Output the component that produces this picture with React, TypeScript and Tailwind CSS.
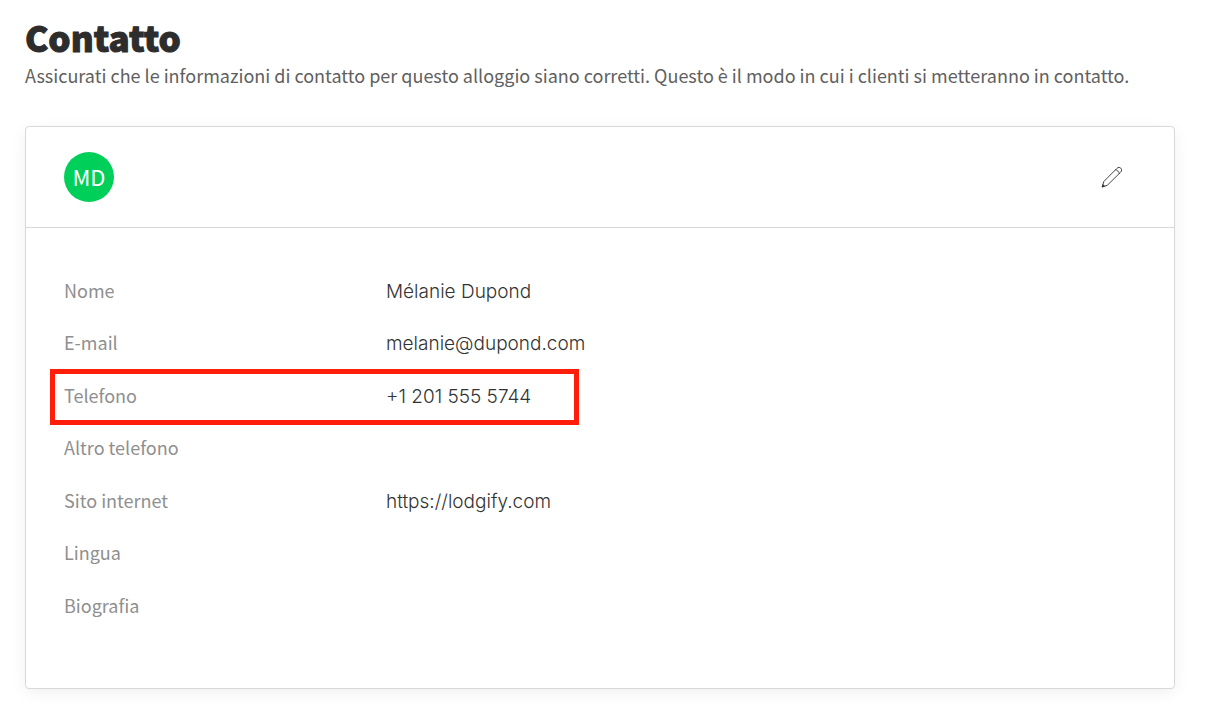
type Field = { label: string; value?: string; href?: string; highlighted?: boolean };

const fields: Field[] = [
  { label: "Nome", value: "Mélanie Dupond" },
  { label: "E-mail", value: "melanie@dupond.com" },
  { label: "Telefono", value: "+1 201 555 5744", highlighted: true },
  { label: "Altro telefono" },
  { label: "Sito internet", value: "https://lodgify.com", href: "https://lodgify.com" },
  { label: "Lingua" },
  { label: "Biografia" },
];

function PencilIcon() {
  return (
    <svg
      viewBox="0 0 22 22"
      className="size-[22px]"
      fill="none"
      stroke="currentColor"
      strokeWidth="0.9"
      strokeLinejoin="round"
      strokeLinecap="round"
      aria-hidden="true"
    >
      <path d="M1.3 20.6 L2.9 15.4 L15.9 2.4 C17.2 1.1 18.7 1.1 19.8 2.2 C20.9 3.3 20.9 4.9 19.6 6.2 L6.6 19 Z" />
      <path d="M14.6 3.7 C16.3 4.1 17.9 5.7 18.3 7.5" />
      <path d="M1.3 20.6 L1.9 18.6 L3.3 20 Z" fill="currentColor" />
    </svg>
  );
}

function FieldRow({ label, value, href, highlighted }: Field) {
  return (
    <div className="relative grid grid-cols-[322px_1fr] content-start items-baseline pt-3">
      <dt className="text-[18px] leading-6 text-[#8f8f8f]">{label}</dt>
      <dd className="font-['Inter',sans-serif] text-[19px] leading-6 font-light text-[#333333]">
        {href ? <a href={href}>{value}</a> : value}
      </dd>
      {highlighted && (
        <div className="pointer-events-none absolute -inset-y-[2px] -left-[14px] w-[529px] border-5 border-[#ff1e0a]" />
      )}
    </div>
  );
}

export default function App() {
  return (
    <main className="min-h-screen bg-white pt-[14px] pr-[39px] pb-5 pl-[25px] font-['Noto_Sans_CJK_SC',sans-serif]">
      <h1 className="text-[35px] leading-[46px] font-black text-[#2d2d2d] [-webkit-text-stroke:1px_#2d2d2d]">
        Contatto
      </h1>
      <p className="mt-px text-[18px] leading-7 text-[#606060]">
        Assicurati che le informazioni di contatto per questo alloggio siano corretti. Questo è il modo in cui i
        clienti si metteranno in contatto.
      </p>

      <section className="mt-[37px] rounded-[4px] border border-[#d8d8d8] bg-white shadow-[0_4px_16px_rgba(0,0,0,0.06)]">
        <header className="flex items-center justify-between border-b border-[#d8d8d8] py-[25px] pr-[51px] pl-[38px]">
          <div className="flex size-[50px] items-center justify-center rounded-full bg-[#00cf5a] pb-0.5 text-[22px] leading-none text-white">
            MD
          </div>
          <button type="button" aria-label="Modifica contatto" className="text-[#333333]">
            <PencilIcon />
          </button>
        </header>
        <dl className="mt-[38px] mb-[55px] grid h-[367px] auto-rows-fr px-[38px]">
          {fields.map((field) => (
            <FieldRow key={field.label} {...field} />
          ))}
        </dl>
      </section>
    </main>
  );
}
